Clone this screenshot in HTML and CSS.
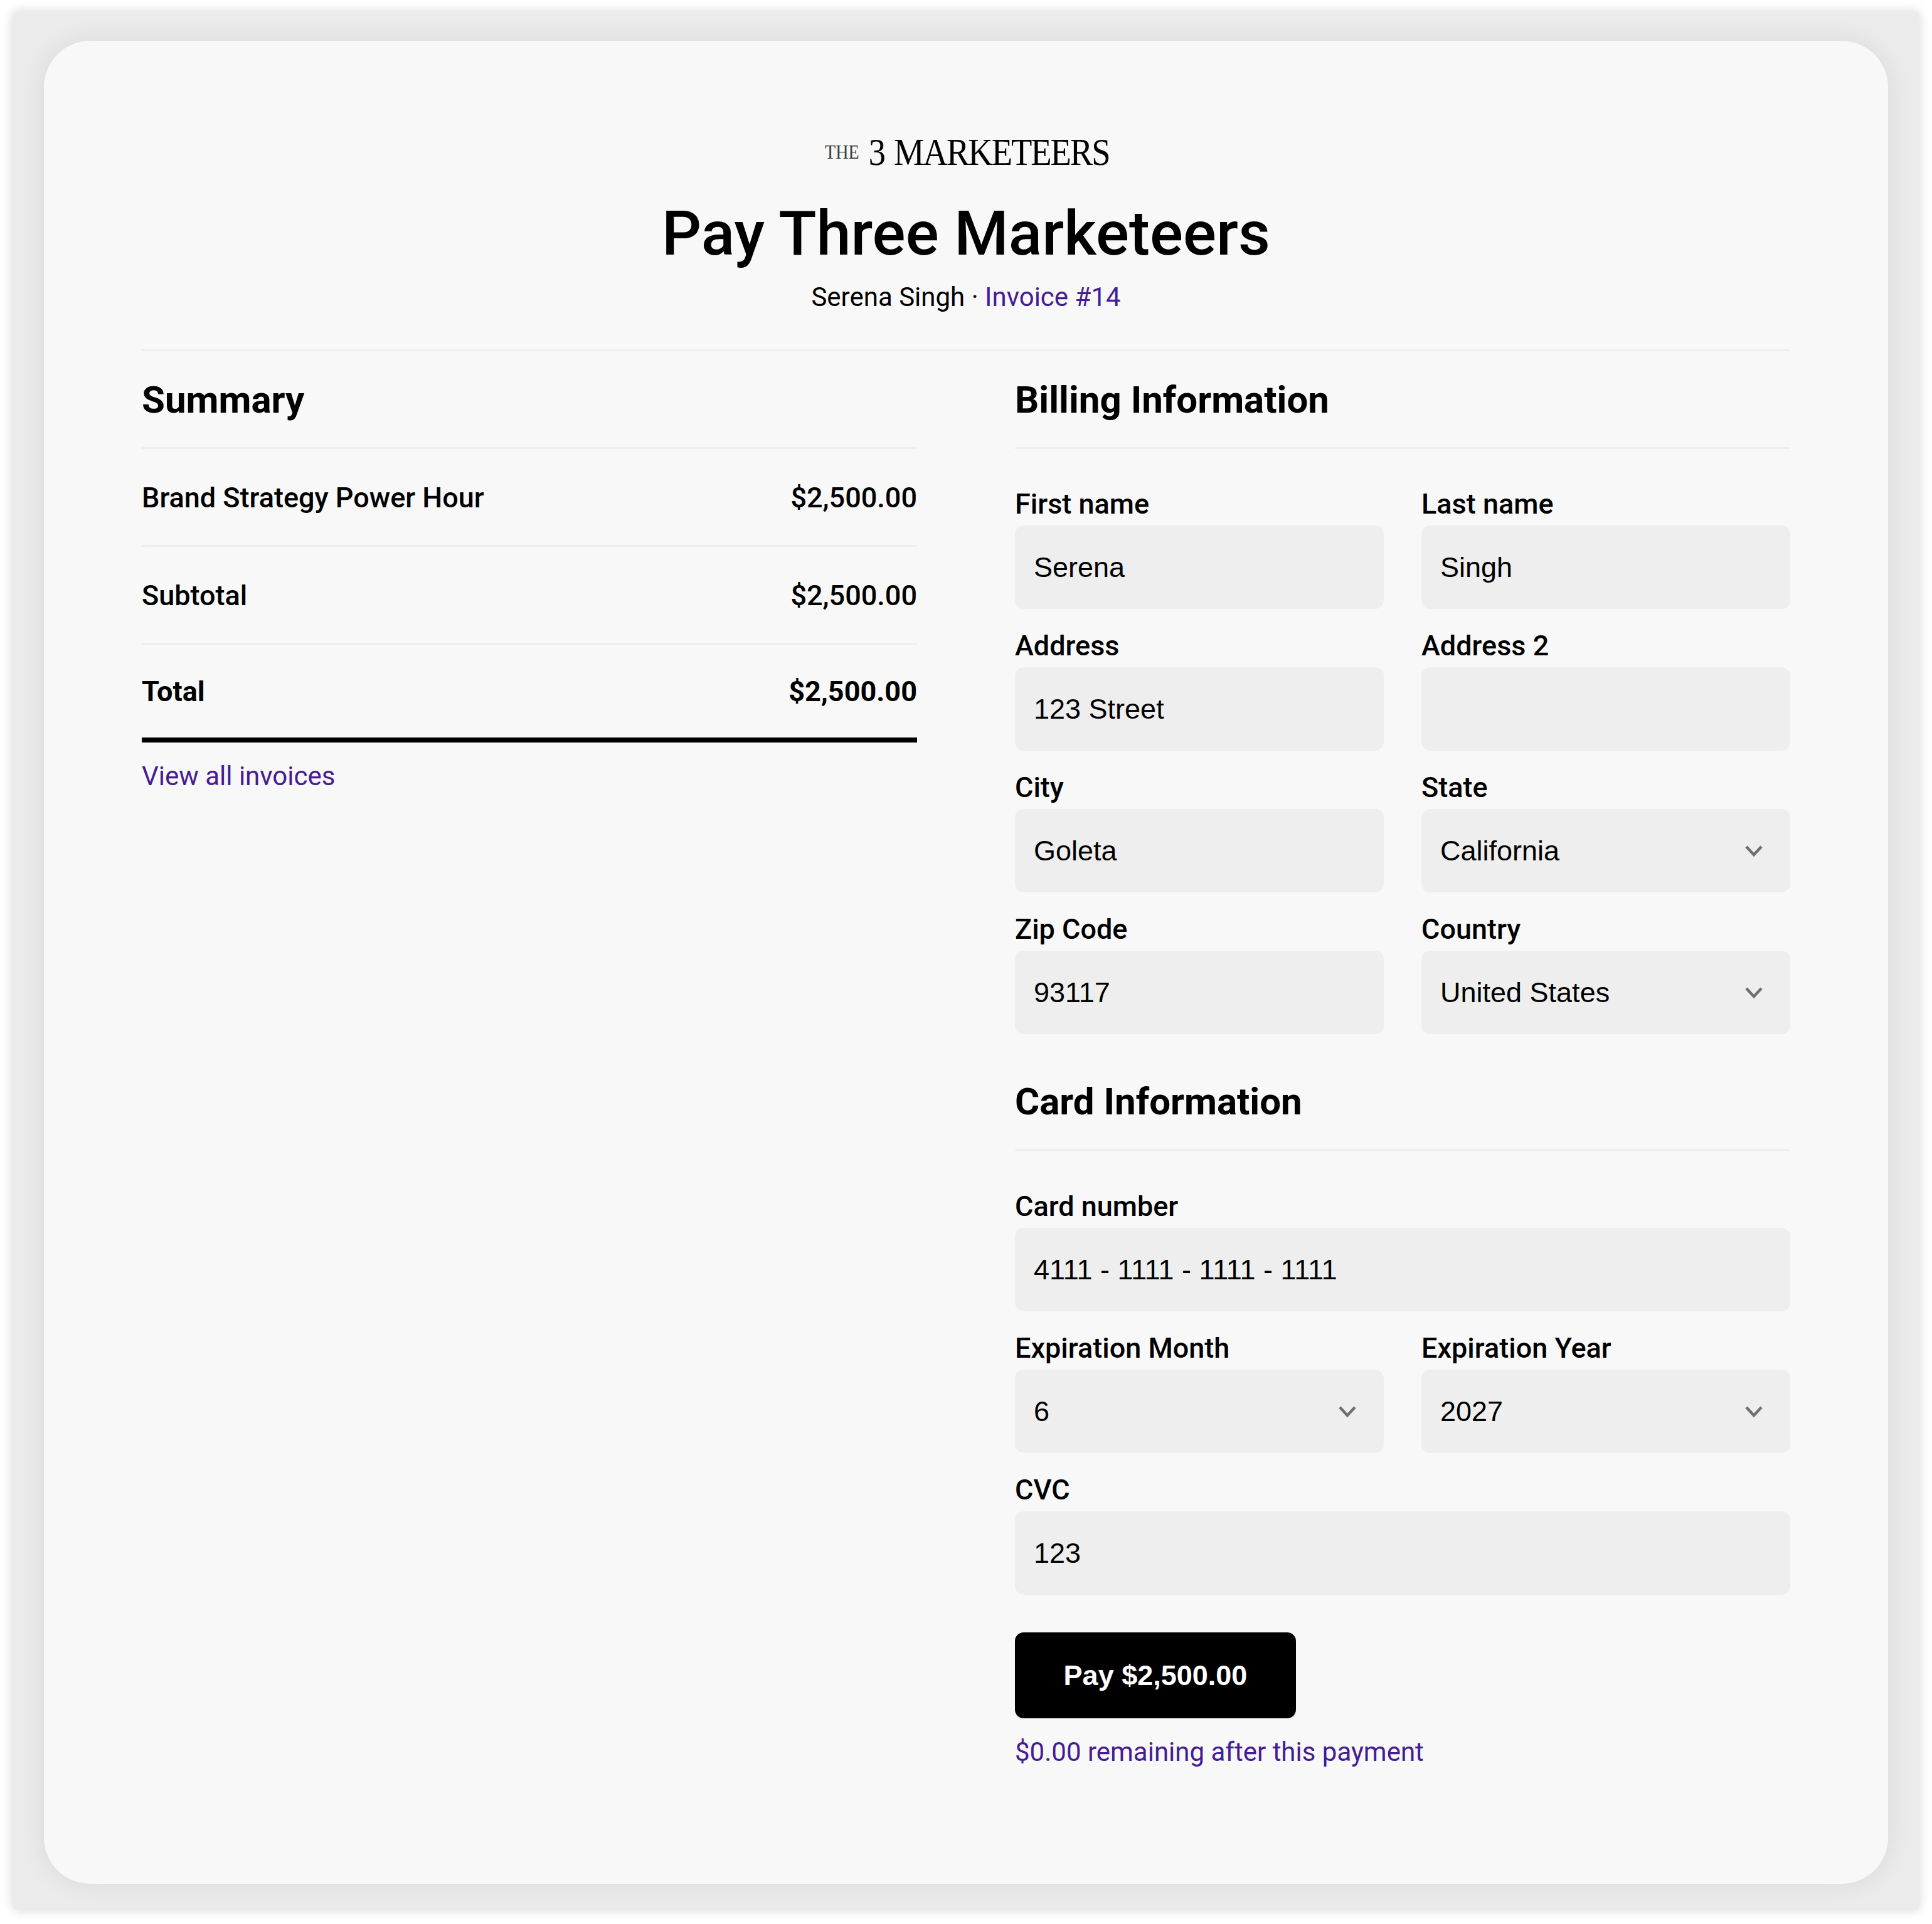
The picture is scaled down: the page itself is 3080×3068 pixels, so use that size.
FILE: index.html
```html
<!DOCTYPE html>
<html lang="en">
<head>
<meta charset="utf-8">
<title>Pay Three Marketeers</title>
<link rel="stylesheet" href="styles.css">
</head>
<body>
<div class="frame">
  <main class="card">
    <header class="head">
      <div class="logo"><span class="logo-the">THE</span><span class="logo-name">3 MARKETEERS</span></div>
      <h1 class="title">Pay Three Marketeers</h1>
      <p class="sub">Serena Singh · <a class="link" href="#">Invoice #14</a></p>
    </header>
    <div class="columns">
      <section class="col">
        <h2 class="section-title">Summary</h2>
        <div class="row"><span>Brand Strategy Power Hour</span><span>$2,500.00</span></div>
        <div class="row"><span>Subtotal</span><span>$2,500.00</span></div>
        <div class="row total"><span>Total</span><span>$2,500.00</span></div>
        <a class="link view-all" href="#">View all invoices</a>
      </section>
      <section class="col">
        <h2 class="section-title">Billing Information</h2>
        <div class="fields">
          <div class="field"><div class="label">First name</div><div class="box">Serena</div></div>
          <div class="field"><div class="label">Last name</div><div class="box">Singh</div></div>
          <div class="field"><div class="label">Address</div><div class="box">123 Street</div></div>
          <div class="field"><div class="label">Address 2</div><div class="box"></div></div>
          <div class="field"><div class="label">City</div><div class="box">Goleta</div></div>
          <div class="field"><div class="label">State</div><div class="box select"><span>California</span><svg class="chev" viewBox="0 0 28 18"><path d="M2 2l12 13L26 2"/></svg></div></div>
          <div class="field"><div class="label">Zip Code</div><div class="box">93117</div></div>
          <div class="field"><div class="label">Country</div><div class="box select"><span>United States</span><svg class="chev" viewBox="0 0 28 18"><path d="M2 2l12 13L26 2"/></svg></div></div>
        </div>
        <h2 class="section-title second">Card Information</h2>
        <div class="fields card-fields">
          <div class="field wide"><div class="label">Card number</div><div class="box">4111 - 1111 - 1111 - 1111</div></div>
          <div class="field"><div class="label">Expiration Month</div><div class="box select"><span>6</span><svg class="chev" viewBox="0 0 28 18"><path d="M2 2l12 13L26 2"/></svg></div></div>
          <div class="field"><div class="label">Expiration Year</div><div class="box select"><span>2027</span><svg class="chev" viewBox="0 0 28 18"><path d="M2 2l12 13L26 2"/></svg></div></div>
          <div class="field wide"><div class="label">CVC</div><div class="box">123</div></div>
        </div>
        <button class="pay" type="button">Pay $2,500.00</button>
        <p class="remaining">$0.00 remaining after this payment</p>
      </section>
    </div>
  </main>
</div>
</body>
</html>
```
FILE: styles.css
```css
* { box-sizing: border-box; }
html, body { margin: 0; background: #fff; }
body { padding: 18px 20px 22px; font-family: Roboto, "Liberation Sans", sans-serif; color: #000; }
.frame {
  height: 3028px;
  padding: 47px 50px 42px;
  background: #ebebeb;
  border-radius: 8px;
  box-shadow: 0 0 18px rgba(0,0,0,.16);
}
.card {
  height: 2939px;
  padding: 135px 156px 0;
  background: #f8f8f8;
  border-radius: 74px;
  box-shadow: 0 0 40px rgba(0,0,0,.08);
}
.head { display: flex; flex-direction: column; align-items: center; border-bottom: 3px solid #eeeeee; height: 360px; }
.logo { display: flex; align-items: center; height: 84px; line-height: 84px; font-family: "Liberation Serif", serif; color: #000; transform: translateX(2px) scaleX(.88); }
.logo-the { font-size: 32px; margin-right: 17px; color: #3a3a3a; }
.logo-name { font-size: 62px; letter-spacing: -2.3px; word-spacing: 4px; }
.title { margin: 28px 0 0; font-size: 99px; line-height: 120px; font-weight: 500; }
.sub { margin: 12px 0 0; font-size: 42px; line-height: 60px; }
.link { color: #451c93; text-decoration: none; }
.columns { display: grid; grid-template-columns: 1236px 1236px; column-gap: 156px; }
.section-title { margin: 0; height: 156px; padding-top: 2px; display: flex; align-items: center; font-size: 60px; line-height: 72px; font-weight: 700; border-bottom: 3px solid #eeeeee; }
.section-title.second { margin-top: 30px; padding-top: 3px; }
.row { height: 156px; padding-top: 2px; display: flex; justify-content: space-between; align-items: center; font-size: 45px; font-weight: 500; border-bottom: 3px solid #eeeeee; }
.row.total { padding-top: 0; font-weight: 700; border-bottom: 8px solid #000; }
.view-all { display: block; margin-top: 24px; font-size: 42px; line-height: 60px; }
.fields { display: grid; grid-template-columns: 588px 588px; gap: 30px 60px; padding-top: 59px; }
.card-fields { padding-top: 60px; }
.field.wide { grid-column: 1 / -1; }
.label { height: 63px; font-size: 45px; line-height: 58px; font-weight: 500; }
.box { height: 133px; padding: 0 30px; display: flex; align-items: center; justify-content: space-between; background: #eeeeee; border-radius: 14px; font-family: "Liberation Sans", sans-serif; font-size: 45px; }
.chev { width: 28px; height: 18px; margin-right: 14px; }
.chev path { fill: none; stroke: #6f6f6f; stroke-width: 4.5; }
.pay { display: block; width: 448px; height: 137px; margin-top: 60px; padding: 0; background: #000; color: #fff; border: 0; border-radius: 14px; font-family: "Liberation Sans", sans-serif; font-size: 45px; font-weight: 700; }
.remaining { margin: 24px 0 0; font-size: 42px; line-height: 60px; color: #451c93; }
```
